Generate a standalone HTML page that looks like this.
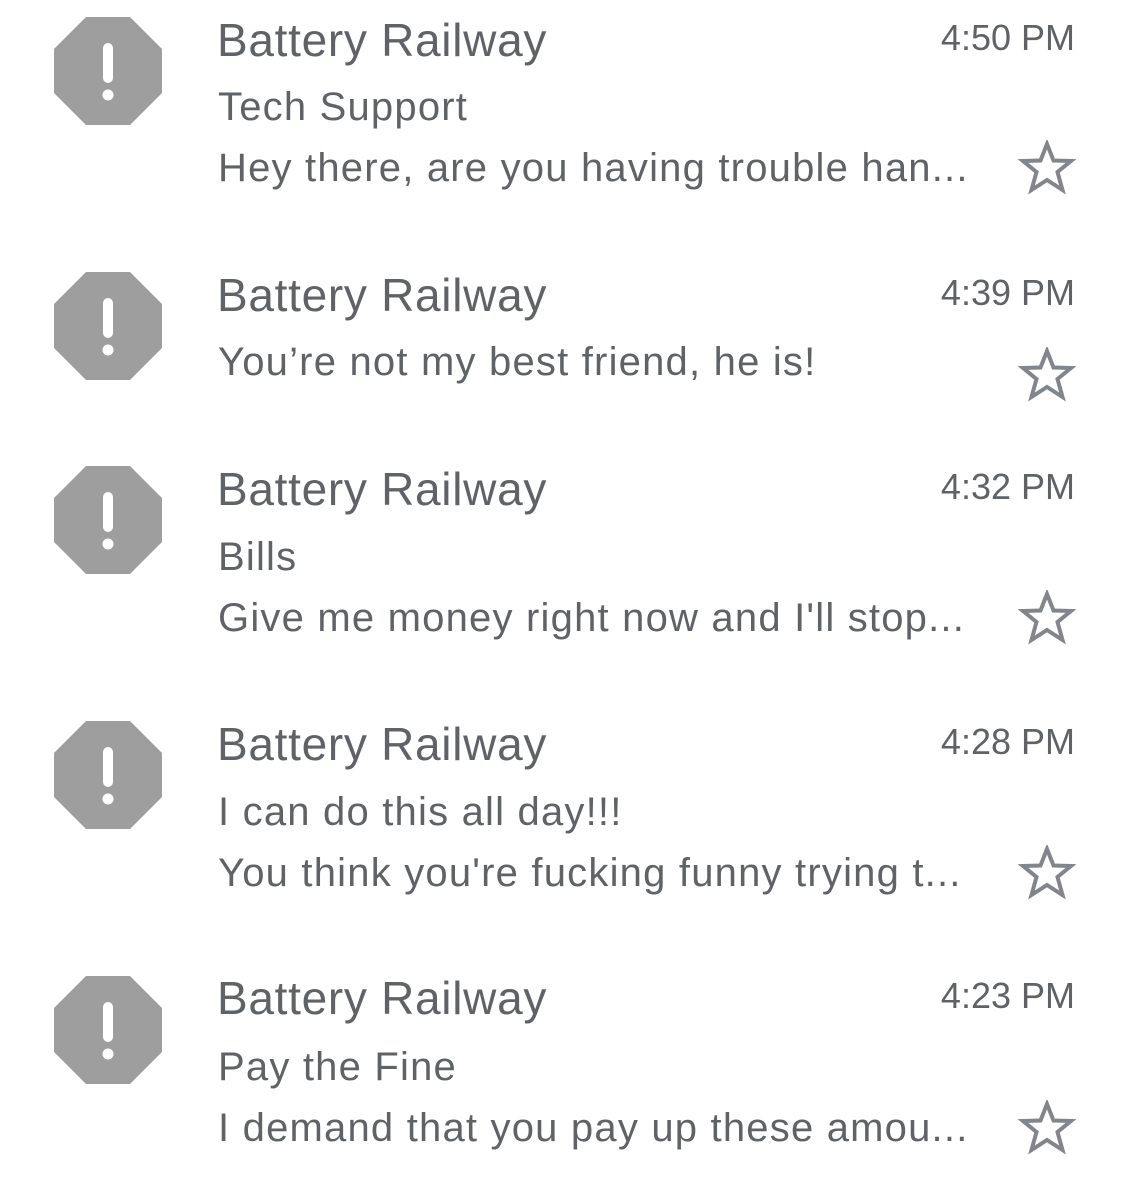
<!DOCTYPE html>
<html><head><style>
html,body{margin:0;padding:0;background:#fff;width:1125px;height:1183px;overflow:hidden;position:relative;font-family:"Liberation Sans",sans-serif;color:#5f6368}
.t{position:absolute;white-space:nowrap;line-height:50px;height:50px}
.n{left:217px;font-size:46px;letter-spacing:0.7px}
.s{left:218px;font-size:40px;letter-spacing:1.2px}
.tm{right:50px;font-size:36px;text-align:right}
.ic{position:absolute;left:54px;width:108px;height:108px}
.st{position:absolute;left:1018px;width:58px;height:56px}
</style></head><body>
<svg width="0" height="0" style="position:absolute"><defs>
<g id="oct"><polygon points="32,0 76,0 108,32 108,76 76,108 32,108 0,76 0,32" fill="#9e9e9e"/><rect x="49" y="26" width="10" height="40" rx="5" fill="#fff"/><circle cx="54" cy="78" r="5.5" fill="#fff"/></g>
<g id="star"><polygon points="29,4 35.5,20.5 53,21 39.5,32 44.5,50 29,40 13.5,50 18.5,32 5,21 22.5,20.5" fill="none" stroke="#80868b" stroke-width="4" stroke-linejoin="miter"/></g>
</defs></svg>

<svg class="ic" style="top:17px" viewBox="0 0 108 108"><use href="#oct"/></svg>
<div class="t n" style="top:15px">Battery Railway</div>
<div class="t tm" style="top:13px">4:50 PM</div>
<div class="t s" style="top:82px">Tech Support</div>
<div class="t s" style="top:143px">Hey there, are you having trouble han...</div>
<svg class="st" style="top:140px" viewBox="0 0 58 56"><use href="#star"/></svg>

<svg class="ic" style="top:272px" viewBox="0 0 108 108"><use href="#oct"/></svg>
<div class="t n" style="top:270px">Battery Railway</div>
<div class="t tm" style="top:268px">4:39 PM</div>
<div class="t s" style="top:337px">You’re not my best friend, he is!</div>
<svg class="st" style="top:347px" viewBox="0 0 58 56"><use href="#star"/></svg>

<svg class="ic" style="top:466px" viewBox="0 0 108 108"><use href="#oct"/></svg>
<div class="t n" style="top:464px">Battery Railway</div>
<div class="t tm" style="top:462px">4:32 PM</div>
<div class="t s" style="top:532px">Bills</div>
<div class="t s" style="top:593px">Give me money right now and I'll stop...</div>
<svg class="st" style="top:590px" viewBox="0 0 58 56"><use href="#star"/></svg>

<svg class="ic" style="top:721px" viewBox="0 0 108 108"><use href="#oct"/></svg>
<div class="t n" style="top:719px">Battery Railway</div>
<div class="t tm" style="top:717px">4:28 PM</div>
<div class="t s" style="top:787px">I can do this all day!!!</div>
<div class="t s" style="top:848px">You think you're fucking funny trying t...</div>
<svg class="st" style="top:845px" viewBox="0 0 58 56"><use href="#star"/></svg>

<svg class="ic" style="top:976px" viewBox="0 0 108 108"><use href="#oct"/></svg>
<div class="t n" style="top:973px">Battery Railway</div>
<div class="t tm" style="top:971px">4:23 PM</div>
<div class="t s" style="top:1042px">Pay the Fine</div>
<div class="t s" style="top:1103px">I demand that you pay up these amou...</div>
<svg class="st" style="top:1100px" viewBox="0 0 58 56"><use href="#star"/></svg>
</body></html>
